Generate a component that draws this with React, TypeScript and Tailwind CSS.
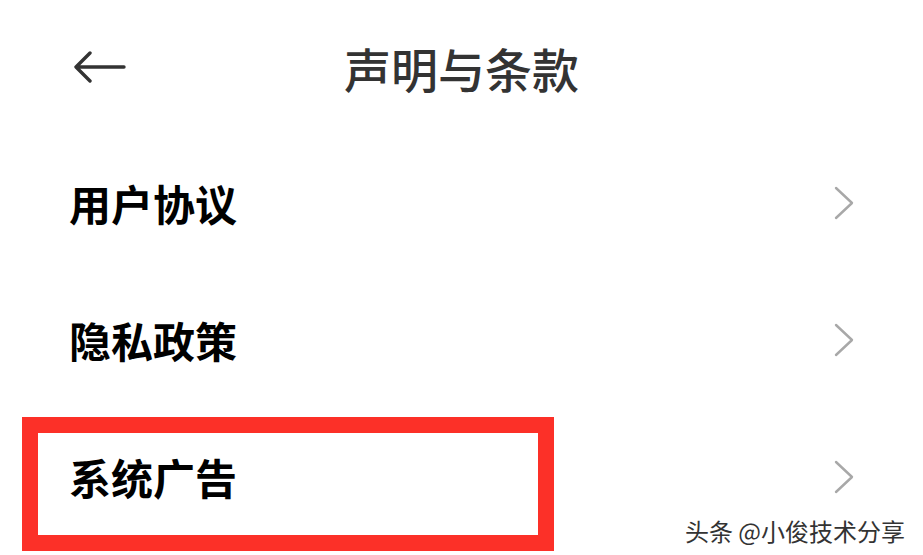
const font = { fontFamily: '"Noto Sans CJK SC", "Noto Sans", sans-serif' }

const items = ['用户协议', '隐私政策', '系统广告']

const Chevron = () => (
  <svg width="22" height="34" viewBox="0 0 22 34" fill="none">
    <path d="M3 2 L19 17 L3 32" stroke="#a8a8a8" strokeWidth="2.4" strokeLinecap="round" strokeLinejoin="round" />
  </svg>
)

export default function App() {
  return (
    <div className="relative w-[923px] h-[555px] bg-white overflow-hidden" style={font}>
      <header className="relative flex h-[134px] items-center pl-[74px]">
        <svg width="52" height="32" viewBox="0 0 52 32" fill="none">
          <path d="M50 16 H3 M16 2 L2 16 L16 30" stroke="#333" strokeWidth="3.4" strokeLinecap="round" strokeLinejoin="round" />
        </svg>
        <h1 className="absolute inset-x-0 text-center text-[47px] font-medium text-[#333] leading-none pointer-events-none">
          声明与条款
        </h1>
      </header>
      <ul>
        {items.map((t) => (
          <li key={t} className="flex h-[137px] items-center justify-between pl-[69px] pr-[68px]">
            <span className="text-[42px] font-bold text-black leading-none">{t}</span>
            <Chevron />
          </li>
        ))}
      </ul>
      <div className="absolute left-[22px] top-[417px] w-[532px] h-[134px] border-[16px] border-[#fc3028]" />
      <div
        className="absolute right-[18px] bottom-[12px] text-[24px] text-[#333] leading-none"
        style={{ textShadow: '1px 1px 0 #fff, -1px -1px 0 #fff' }}
      >
        头条 @小俊技术分享
      </div>
    </div>
  )
}
